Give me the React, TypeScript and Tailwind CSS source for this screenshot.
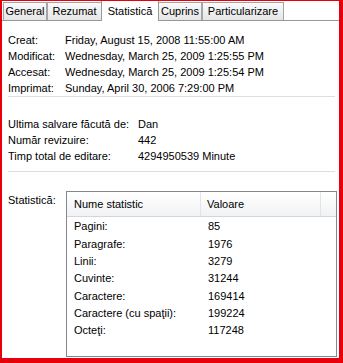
import React from 'react'

const tabs = [
  { name: 'General', w: 'w-[44px]' },
  { name: 'Rezumat', w: 'w-[55px]' },
  { name: 'Statistică', w: 'w-[58px]', active: true },
  { name: 'Cuprins', w: 'w-[44px]' },
  { name: 'Particularizare', w: 'w-[82px]' },
]

const dates = [
  ['Creat:', 'Friday, August 15, 2008 11:55:00 AM'],
  ['Modificat:', 'Wednesday, March 25, 2009 1:25:55 PM'],
  ['Accesat:', 'Wednesday, March 25, 2009 1:25:54 PM'],
  ['Imprimat:', 'Sunday, April 30, 2006 7:29:00 PM'],
]

const info = [
  ['Ultima salvare făcută de:', 'Dan'],
  ['Număr revizuire:', '442'],
  ['Timp total de editare:', '4294950539 Minute'],
]

const stats = [
  ['Pagini:', '85'],
  ['Paragrafe:', '1976'],
  ['Linii:', '3279'],
  ['Cuvinte:', '31244'],
  ['Caractere:', '169414'],
  ['Caractere (cu spaţii):', '199224'],
  ['Octeţi:', '117248'],
]

export default function App() {
  return (
    <div
      className="w-[343px] h-[363px] bg-white border-red-600 border-l-[2px] border-r-[4px] border-b-[5px] border-t-[1px] text-[11px] text-black overflow-hidden whitespace-nowrap"
      style={{ fontFamily: '"Liberation Sans", Arial, sans-serif' }}
    >
      {/* Tab strip */}
      <div className="relative h-[20px] flex items-end pl-[1px] border-b border-[#919b9c]">
        {tabs.map(t => (
          <div
            key={t.name}
            className={
              t.active
                ? `${t.w} h-[21px] -mb-[1px] -mx-[1px] z-10 bg-white border border-b-0 border-[#919b9c] flex items-start justify-center pt-[2px]`
                : `${t.w} h-[18px] bg-gradient-to-b from-[#fafafa] to-[#e6e6e6] border border-b-0 border-[#a5a5a5] flex items-center justify-center`
            }
          >
            {t.name}
          </div>
        ))}
      </div>

      <div className="pl-[6px] pr-[2px] pt-[11px]">
        {/* Dates */}
        <div className="flex flex-col">
          {dates.map(([l, v]) => (
            <div key={l} className="flex h-[16px] items-center">
              <span className="w-[57px] shrink-0">{l}</span>
              <span>{v}</span>
            </div>
          ))}
        </div>
        <div className="h-px bg-[#dedede] mr-[2px]" />

        {/* Info */}
        <div className="flex flex-col pt-[19px]">
          {info.map(([l, v]) => (
            <div key={l} className="flex h-[16px] items-center">
              <span className="w-[130px] shrink-0">{l}</span>
              <span>{v}</span>
            </div>
          ))}
        </div>
        <div className="h-px bg-[#dedede] mr-[2px] mt-[7px]" />

        {/* Statistics */}
        <div className="flex pt-[19px]">
          <span className="w-[58px] shrink-0 pt-[1px]">Statistică:</span>
          <div className="w-[272px] h-[166px] border border-[#828790] bg-white flex flex-col">
            <div className="h-[25px] flex items-center bg-gradient-to-b from-white to-[#f1f2f4] border-b border-[#d5d5d5]">
              <div className="w-[134px] h-full pl-[7px] flex items-center border-r border-[#e3e4e6]">Nume statistic</div>
              <div className="w-[120px] h-full pl-[6px] flex items-center border-r border-[#e3e4e6]">Valoare</div>
            </div>
            <div className="flex flex-col pt-[1px]">
              {stats.map(([l, v]) => (
                <div key={l} className="flex h-[17.3px] items-center">
                  <span className="w-[134px] pl-[7px] shrink-0">{l}</span>
                  <span className="pl-[7px]">{v}</span>
                </div>
              ))}
            </div>
          </div>
        </div>
      </div>
    </div>
  )
}
